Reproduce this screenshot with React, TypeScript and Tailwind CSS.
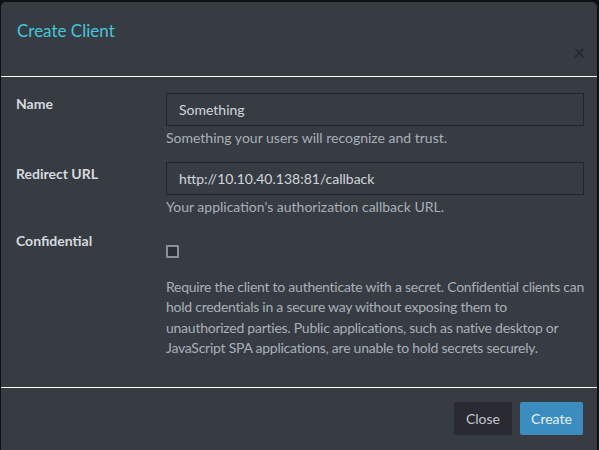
import React from "react";

export default function App() {
  return (
    <div className="w-[599px] h-[450px] bg-[#0e1013] overflow-hidden pt-[2px] pl-[1px]" style={{ fontFamily: "Lato, 'Liberation Sans', sans-serif" }}>
      <div className="w-[596px] h-[460px] bg-[#373c43] rounded-[5px] flex flex-col">
        <div className="h-[75px] relative border-b border-white">
          <div className="pl-[16px] pt-[17px] text-[17px] text-[#45c6dd] leading-[24px]">Create Client</div>
          <div className="absolute right-[12px] top-[40px] text-[#262a2f] text-[20px] leading-[20px] font-bold">×</div>
        </div>
        <div className="h-[311px] border-b border-white pl-[15px] pr-[13px] pt-[16px] text-[14px]">
          <div className="flex">
            <div className="w-[150px] shrink-0 pt-[1px] font-bold text-[#d6d9dd] leading-[20px]">Name</div>
            <div className="flex-1">
              <div className="h-[33px] border border-[#23262b] flex items-center pl-[12px] text-[#d2d5d9]">Something</div>
              <div className="text-[#a9afb6] leading-[20px] mt-[2px]">Something your users will recognize and trust.</div>
            </div>
          </div>
          <div className="flex mt-[14px]">
            <div className="w-[150px] shrink-0 pt-[2px] font-bold text-[#d6d9dd] leading-[20px]">Redirect URL</div>
            <div className="flex-1">
              <div className="h-[33px] border border-[#23262b] flex items-center pl-[12px] text-[#d2d5d9]">http://10.10.40.138:81/callback</div>
              <div className="text-[#a9afb6] leading-[20px] mt-[2px]">Your application's authorization callback URL.</div>
            </div>
          </div>
          <div className="flex mt-[12px]">
            <div className="w-[150px] shrink-0 pt-[2px] font-bold text-[#d6d9dd] leading-[20px]">Confidential</div>
            <div className="flex-1 min-w-0">
              <div className="mt-[16px] w-[13px] h-[13px] border-2 border-[#8d9096] bg-[#2b2d34] rounded-[1px]" />
              <div className="text-[#a9afb6] leading-[20.3px] mt-[19px] w-[422px] tracking-[-0.25px]">
                Require the client to authenticate with a secret. Confidential clients can hold credentials in a secure way without exposing them to unauthorized parties. Public applications, such as native desktop or JavaScript SPA applications, are unable to hold secrets securely.
              </div>
            </div>
          </div>
        </div>
        <div className="flex justify-end gap-[8px] pr-[14px] pt-[14px] text-[14px]">
          <button className="h-[33px] w-[58px] bg-[#2a2a32] text-[#c3c6cb] rounded-[2px]">Close</button>
          <button className="h-[33px] w-[63px] bg-[#3c8dbf] text-[#e8f1f7] rounded-[2px]">Create</button>
        </div>
      </div>
    </div>
  );
}
